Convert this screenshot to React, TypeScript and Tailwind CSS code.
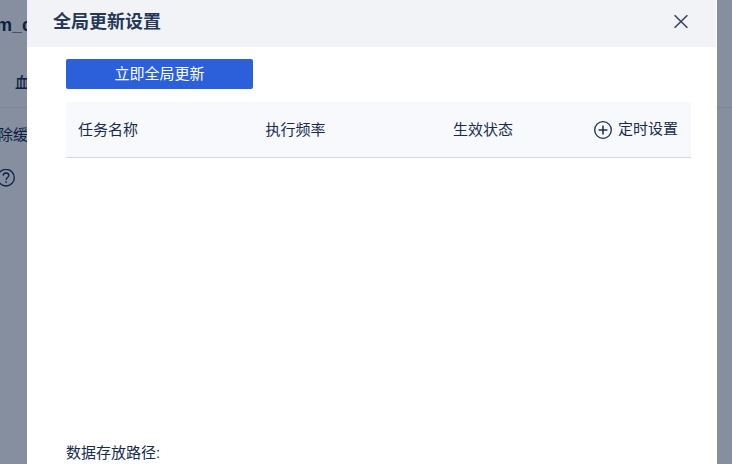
import React from 'react';

const columns = ['任务名称', '执行频率', '生效状态'];

function CloseIcon() {
  return (
    <svg viewBox="0 0 16 16" className="size-4" fill="none" stroke="currentColor" strokeWidth="1.6" aria-hidden="true">
      <path d="M1.6 1.2 14.4 13.8M14.4 1.2 1.6 13.8" />
    </svg>
  );
}

function PlusCircleIcon() {
  return (
    <svg viewBox="0 0 18 18" className="size-[18px]" fill="none" stroke="currentColor" strokeWidth="1.3" aria-hidden="true">
      <circle cx="9" cy="9" r="8.3" />
      <path d="M9 4.6v8.8M4.6 9h8.8" strokeWidth="1.5" />
    </svg>
  );
}

function HelpIcon() {
  return (
    <svg viewBox="0 0 18 18" className="size-[18px]" fill="none" stroke="currentColor" strokeWidth="1.3" aria-hidden="true">
      <circle cx="9" cy="8.7" r="8.3" />
      <path d="M6.2 6.8c0-1.7 1.2-2.8 2.8-2.8s2.8 1 2.8 2.5c0 2-2.7 2.1-2.7 4.4" />
      <path d="M9.1 12.2v1.5" strokeWidth="1.5" />
    </svg>
  );
}

function PageBehind() {
  return (
    <div className="min-h-screen overflow-hidden bg-white text-[#0b2048]" aria-hidden="true">
      <div className="flex h-[108px] flex-col border-b border-[#e6eaf0]">
        <div className="-ml-1 h-12 text-lg leading-[50px] font-bold whitespace-nowrap">m_c</div>
        <div className="flex h-[59px] items-center pt-3 pl-[15px] text-[15px] font-medium">血</div>
      </div>
      <div className="-ml-0.5 flex h-[54px] items-center text-[15px]">除缓</div>
      <div className="-ml-[3px] flex h-8 items-center">
        <HelpIcon />
      </div>
    </div>
  );
}

function SettingsDialog() {
  return (
    <section
      role="dialog"
      aria-modal="true"
      aria-labelledby="dialog-title"
      className="flex min-w-0 flex-1 flex-col bg-white"
    >
      <header className="mr-px flex h-[47px] shrink-0 items-center justify-between bg-[#f2f3f7] pr-[27px] pb-1 pl-[26px]">
        <h1 id="dialog-title" className="text-lg font-bold text-[#253858]">
          全局更新设置
        </h1>
        <button type="button" aria-label="关闭" className="text-[#344563]">
          <CloseIcon />
        </button>
      </header>
      <div className="pt-3 pr-[26px] pl-[39px]">
        <button type="button" className="block h-[30px] w-[187px] rounded-[2px] bg-[#2b60da] text-[15px] leading-[30px] text-white">
          立即全局更新
        </button>
        <div className="mt-[13px] min-h-[339px]">
          <table className="w-full table-fixed border-separate border-spacing-0 text-[15px]">
            <thead>
              <tr className="h-14 bg-[#f8f9fd]">
                {columns.map((name, i) => (
                  <th
                    key={name}
                    scope="col"
                    className={`border-b border-[#d3d7de] px-3 pt-0.5 text-left font-normal ${i < 2 ? 'w-3/10' : 'w-1/5'}`}
                  >
                    {name}
                  </th>
                ))}
                <th scope="col" className="w-1/5 border-b border-[#d3d7de] pr-[13px] font-normal">
                  <button type="button" className="ml-auto flex items-center gap-1.5 whitespace-nowrap">
                    <PlusCircleIcon />
                    定时设置
                  </button>
                </th>
              </tr>
            </thead>
            <tbody />
          </table>
        </div>
        <p className="text-[15px] leading-6">数据存放路径:</p>
      </div>
    </section>
  );
}

export default function App() {
  return (
    <div className="relative font-['Liberation_Sans','Noto_Sans_CJK_SC',sans-serif] text-[#172b4d]">
      <PageBehind />
      <div className="fixed inset-0 flex overflow-hidden bg-[#0d1f40]/50 pr-[15px] pl-[27px]">
        <SettingsDialog />
      </div>
    </div>
  );
}
